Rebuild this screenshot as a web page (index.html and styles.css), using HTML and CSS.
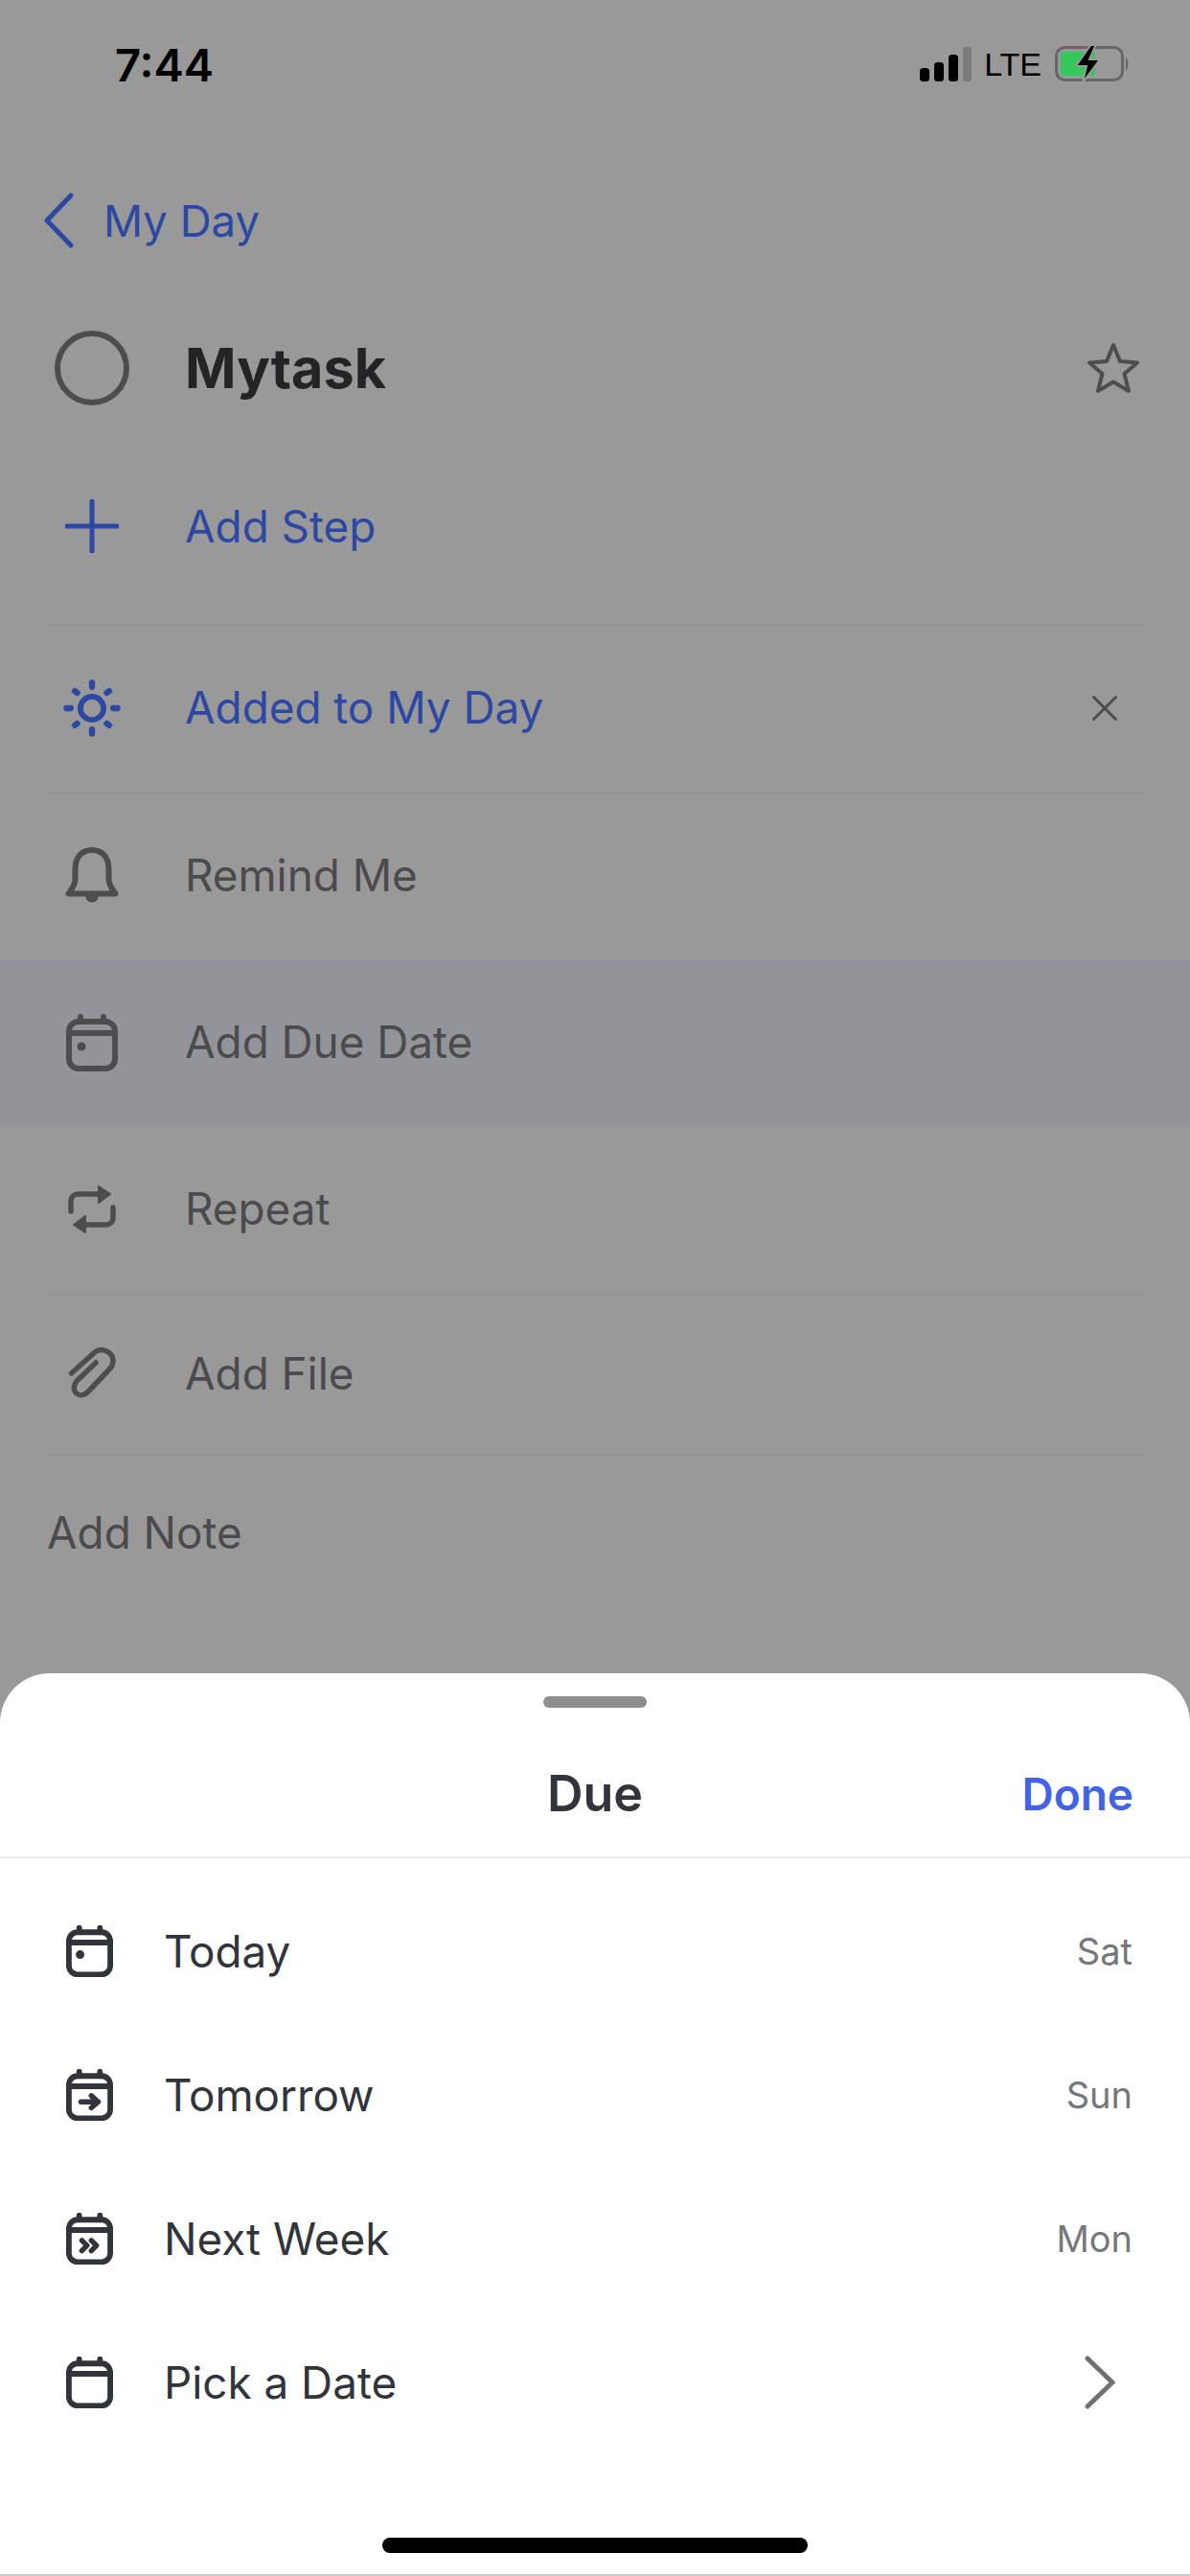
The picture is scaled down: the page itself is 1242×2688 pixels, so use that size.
FILE: index.html
```html
<!DOCTYPE html>
<html lang="en">

<head>
    <meta charset="UTF-8">
    <meta name="viewport" content="width=device-width, initial-scale=1.0">
    <title>Mytask</title>
    <link rel="stylesheet" href="styles.css">
</head>

<body>
    <div id="app">
        <div class="status-bar">
            <span class="time">7:44</span>
            <div class="status-icons">
                <svg width="54" height="36" viewBox="0 0 54 36">
                    <rect x="0" y="22" width="10" height="14" rx="3.5" fill="#000" />
                    <rect x="15" y="16" width="10" height="20" rx="3.5" fill="#000" />
                    <rect x="30" y="8" width="10" height="28" rx="3.5" fill="#000" />
                    <rect x="45" y="0" width="9" height="36" rx="2.5" fill="#7c7c7c" />
                </svg>
                <span class="lte">LTE</span>
                <svg width="80" height="38" viewBox="0 0 78 38">
                    <rect x="1.5" y="1.5" width="69" height="34" rx="9" fill="none" stroke="#666" stroke-width="3" />
                    <rect x="6" y="6" width="36" height="25" rx="3" fill="#34c759" />
                    <path d="M74 12c3 2 3 11 0 14z" fill="#666" />
                    <path d="M38 -2L22 21H33L29 38L47 14H36L43 -2z" fill="#000" stroke="#999" stroke-width="2" />
                </svg>
            </div>
        </div>

        <div class="back-row">
            <svg width="34" height="58" viewBox="0 0 34 58">
                <path d="M30 3L5 29L30 55" fill="none" stroke="#2c48a3" stroke-width="5" stroke-linecap="round" stroke-linejoin="round" />
            </svg>
            <span>My Day</span>
        </div>

        <div class="title-row">
            <span class="icon-col"><span class="check-circle"></span></span>
            <h1>Mytask</h1>
            <svg class="star" width="56" height="54" viewBox="0 0 56 54">
                <path d="M28 3L35 20L53 21.500L39.500 33L44 51L28 41.500L12 51L16.500 33L3 21.500L21 20z" fill="none" stroke="#4d4d4f" stroke-width="4" stroke-linejoin="round" />
            </svg>
        </div>

        <div class="row row-step blue">
            <span class="icon-col">
                <svg width="56" height="56" viewBox="0 0 56 56">
                    <path d="M28 2V54M2 28H54" fill="none" stroke="#2c48a3" stroke-width="5" stroke-linecap="round" />
                </svg>
            </span>
            <span>Add Step</span>
        </div>
        <div class="divider"></div>

        <div class="row blue">
            <span class="icon-col">
                <svg width="60" height="60" viewBox="0 0 62 62">
                    <circle cx="31" cy="31" r="12.500" fill="none" stroke="#2c48a3" stroke-width="6" />
                    <path d="M31 3.500V8M31 54V58.500M3.500 31H8M54 31H58.500M12.500 12.500L15 14.500M49.500 12.500L47 14.500M12.500 49.500L15 47.500M49.500 49.500L47 47.500" fill="none" stroke="#2c48a3" stroke-width="6.500" stroke-linecap="round" />
                </svg>
            </span>
            <span>Added to My Day</span>
            <svg class="close" width="26" height="26" viewBox="0 0 26 26">
                <path d="M1.500 1.500L24.500 24.500M24.500 1.500L1.500 24.500" fill="none" stroke="#4d4d4f" stroke-width="3" stroke-linecap="round" />
            </svg>
        </div>
        <div class="divider"></div>

        <div class="row">
            <span class="icon-col">
                <svg width="56" height="60" viewBox="0 0 56 60">
                    <path d="M28 3C16 3 10.500 12 10.500 23V33C10.500 40 7 43 3.500 48.500H52.500C49 43 45.500 40 45.500 33V23C45.500 12 40 3 28 3z" fill="none" stroke="#4d4d4f" stroke-width="6" stroke-linejoin="round" />
                    <path d="M21 50C21 60 35 60 35 50z" fill="#4d4d4f" />
                </svg>
            </span>
            <span>Remind Me</span>
        </div>

        <div class="row row-selected">
            <span class="icon-col">
                <svg width="54" height="60" viewBox="0 0 54 60">
                    <rect x="3" y="8" width="48" height="49" rx="10" fill="none" stroke="#4d4d4f" stroke-width="6" />
                    <path d="M3 20H51M15 3V8M39 3V8" fill="none" stroke="#4d4d4f" stroke-width="6" stroke-linecap="round" />
                    <circle cx="16" cy="34" r="4.500" fill="#4d4d4f" />
                </svg>
            </span>
            <span>Add Due Date</span>
        </div>

        <div class="row">
            <span class="icon-col">
                <svg width="50" height="50" viewBox="0 0 50 50">
                    <path d="M3 27V17C3 12 6 9 11 9H33M47 23V33C47 38 44 41 39 41H17" fill="none" stroke="#4d4d4f" stroke-width="5.500" stroke-linecap="round" />
                    <path d="M32 1L44 9L32 18zM18 32L6 41L18 49z" fill="#4d4d4f" stroke="#4d4d4f" stroke-width="2" stroke-linejoin="round" />
                </svg>
            </span>
            <span>Repeat</span>
        </div>
        <div class="divider"></div>

        <div class="row row-file">
            <span class="icon-col">
                <svg width="50" height="56" viewBox="0 0 50 56">
                    <path d="M3.500 28L28 6C35 0 47 6 47 15C47 19 45 22 43 24L21 47C13 56 1 47 9 36L29 17" fill="none" stroke="#4d4d4f" stroke-width="5.500" stroke-linecap="round" />
                </svg>
            </span>
            <span>Add File</span>
        </div>
        <div class="divider"></div>

        <div class="note">Add Note</div>

        <div class="sheet">
            <div class="handle"></div>
            <div class="sheet-header">
                <h2>Due</h2>
                <span class="done">Done</span>
            </div>
            <div class="due-list">
                <div class="due-row">
                    <svg width="49" height="54" viewBox="0 0 54 60">
                        <rect x="3" y="8" width="48" height="49" rx="10" fill="none" stroke="#32343b" stroke-width="6.500" />
                        <path d="M3 20H51M15 3V8M39 3V8" fill="none" stroke="#32343b" stroke-width="6.500" stroke-linecap="round" />
                        <circle cx="16" cy="34" r="5" fill="#32343b" />
                    </svg>
                    <span class="due-name">Today</span>
                    <span class="due-day">Sat</span>
                </div>
                <div class="due-row">
                    <svg width="49" height="54" viewBox="0 0 54 60">
                        <rect x="3" y="8" width="48" height="49" rx="10" fill="none" stroke="#32343b" stroke-width="6.500" />
                        <path d="M3 20H51M15 3V8M39 3V8" fill="none" stroke="#32343b" stroke-width="6.500" stroke-linecap="round" />
                        <path d="M17 38H37M29 31L37 38L29 45" fill="none" stroke="#32343b" stroke-width="6" stroke-linecap="round" stroke-linejoin="round" />
                    </svg>
                    <span class="due-name">Tomorrow</span>
                    <span class="due-day">Sun</span>
                </div>
                <div class="due-row">
                    <svg width="49" height="54" viewBox="0 0 54 60">
                        <rect x="3" y="8" width="48" height="49" rx="10" fill="none" stroke="#32343b" stroke-width="6.500" />
                        <path d="M3 20H51M15 3V8M39 3V8" fill="none" stroke="#32343b" stroke-width="6.500" stroke-linecap="round" />
                        <path d="M18 32L24 38L18 44M29 32L35 38L29 44" fill="none" stroke="#32343b" stroke-width="6" stroke-linecap="round" stroke-linejoin="round" />
                    </svg>
                    <span class="due-name">Next Week</span>
                    <span class="due-day">Mon</span>
                </div>
                <div class="due-row">
                    <svg width="49" height="54" viewBox="0 0 54 60">
                        <rect x="3" y="8" width="48" height="49" rx="10" fill="none" stroke="#32343b" stroke-width="6.500" />
                        <path d="M3 20H51M15 3V8M39 3V8" fill="none" stroke="#32343b" stroke-width="6.500" stroke-linecap="round" />
                    </svg>
                    <span class="due-name">Pick a Date</span>
                    <svg class="chevron" width="32" height="56" viewBox="0 0 32 56">
                        <path d="M3 3L29 28L3 53" fill="none" stroke="#707175" stroke-width="5" stroke-linecap="round" stroke-linejoin="miter" />
                    </svg>
                </div>
            </div>
            <div class="home-bar"></div>
        </div>
    </div>
</body>

</html>
```

FILE: styles.css
```css
body {
    margin: 0;
    padding: 0;
    font-family: Inter, "Liberation Sans", sans-serif;
}

#app {
    position: relative;
    width: 1242px;
    height: 2688px;
    overflow: hidden;
    background-color: #999999;
    color: #4b4b4d;
    font-size: 45.8px;
}

.status-bar {
    display: flex;
    justify-content: space-between;
    align-items: center;
    height: 70px;
    padding: 32px 62px 0 120px;
}

.time {
    font-size: 47px;
    font-weight: 600;
    color: #000;
}

.status-icons {
    display: flex;
    align-items: center;
    gap: 13px;
}

.lte {
    font-family: "Liberation Sans", sans-serif;
    font-size: 34px;
    color: #000;
}

.back-row {
    display: flex;
    align-items: center;
    gap: 30px;
    height: 64px;
    margin-top: 96px;
    padding-left: 44px;
    font-size: 45.5px;
    color: #2c48a3;
}

.title-row {
    display: flex;
    align-items: center;
    height: 90px;
    margin-top: 77px;
}

.icon-col {
    display: flex;
    justify-content: center;
    align-items: center;
    flex: none;
    width: 192px;
    margin-right: 1px;
}

.check-circle {
    width: 66px;
    height: 66px;
    border: 6px solid #4d4d4f;
    border-radius: 50%;
}

h1 {
    margin: 0;
    font-size: 57.5px;
    font-weight: 700;
    color: #232427;
}

.star {
    margin-left: auto;
    margin-right: 52px;
}

.row {
    display: flex;
    align-items: center;
    box-sizing: border-box;
    height: 174px;
    padding-bottom: 3px;
}

.row-step {
    height: 197px;
    margin-top: 26px;
    padding-bottom: 9px;
}

.blue {
    color: #2c48a3;
}

.close {
    margin-left: auto;
    margin-right: 76px;
}

.row-selected {
    background-color: #92949a;
}

.row-file {
    height: 167px;
}

.divider {
    height: 1px;
    margin: 0 48px;
    background-color: #8e8e8e;
}

.note {
    padding: 53px 0 0 49px;
}

.sheet {
    position: absolute;
    left: 0;
    right: 0;
    bottom: 0;
    box-sizing: border-box;
    height: 942px;
    background-color: #fff;
    border-bottom: 2px solid #c8c8c8;
    border-radius: 52px 52px 0 0;
}

.handle {
    width: 108px;
    height: 12px;
    margin: 24px auto 0;
    background-color: #8e8e8e;
    border-radius: 6px;
}

.sheet-header {
    display: flex;
    justify-content: center;
    align-items: center;
    position: relative;
    box-sizing: border-box;
    height: 157px;
    padding-top: 24px;
    border-bottom: 2px solid #ececec;
}

h2 {
    margin: 0;
    font-size: 52px;
    font-weight: 600;
    color: #32343b;
}

.done {
    position: absolute;
    right: 59px;
    top: 62px;
    font-size: 46px;
    font-weight: 600;
    color: #4263e6;
}

.due-list {
    padding-top: 22px;
}

.due-row {
    display: flex;
    align-items: center;
    height: 150px;
    padding: 0 60px 0 69px;
}

.due-name {
    margin-left: 53px;
    color: #32343b;
}

.due-day {
    margin-left: auto;
    font-size: 38px;
    color: #76777a;
}

.chevron {
    margin-left: auto;
    margin-right: 18px;
}

.home-bar {
    position: absolute;
    left: 399px;
    bottom: 22px;
    width: 444px;
    height: 16px;
    background-color: #000;
    border-radius: 8px;
}
```
